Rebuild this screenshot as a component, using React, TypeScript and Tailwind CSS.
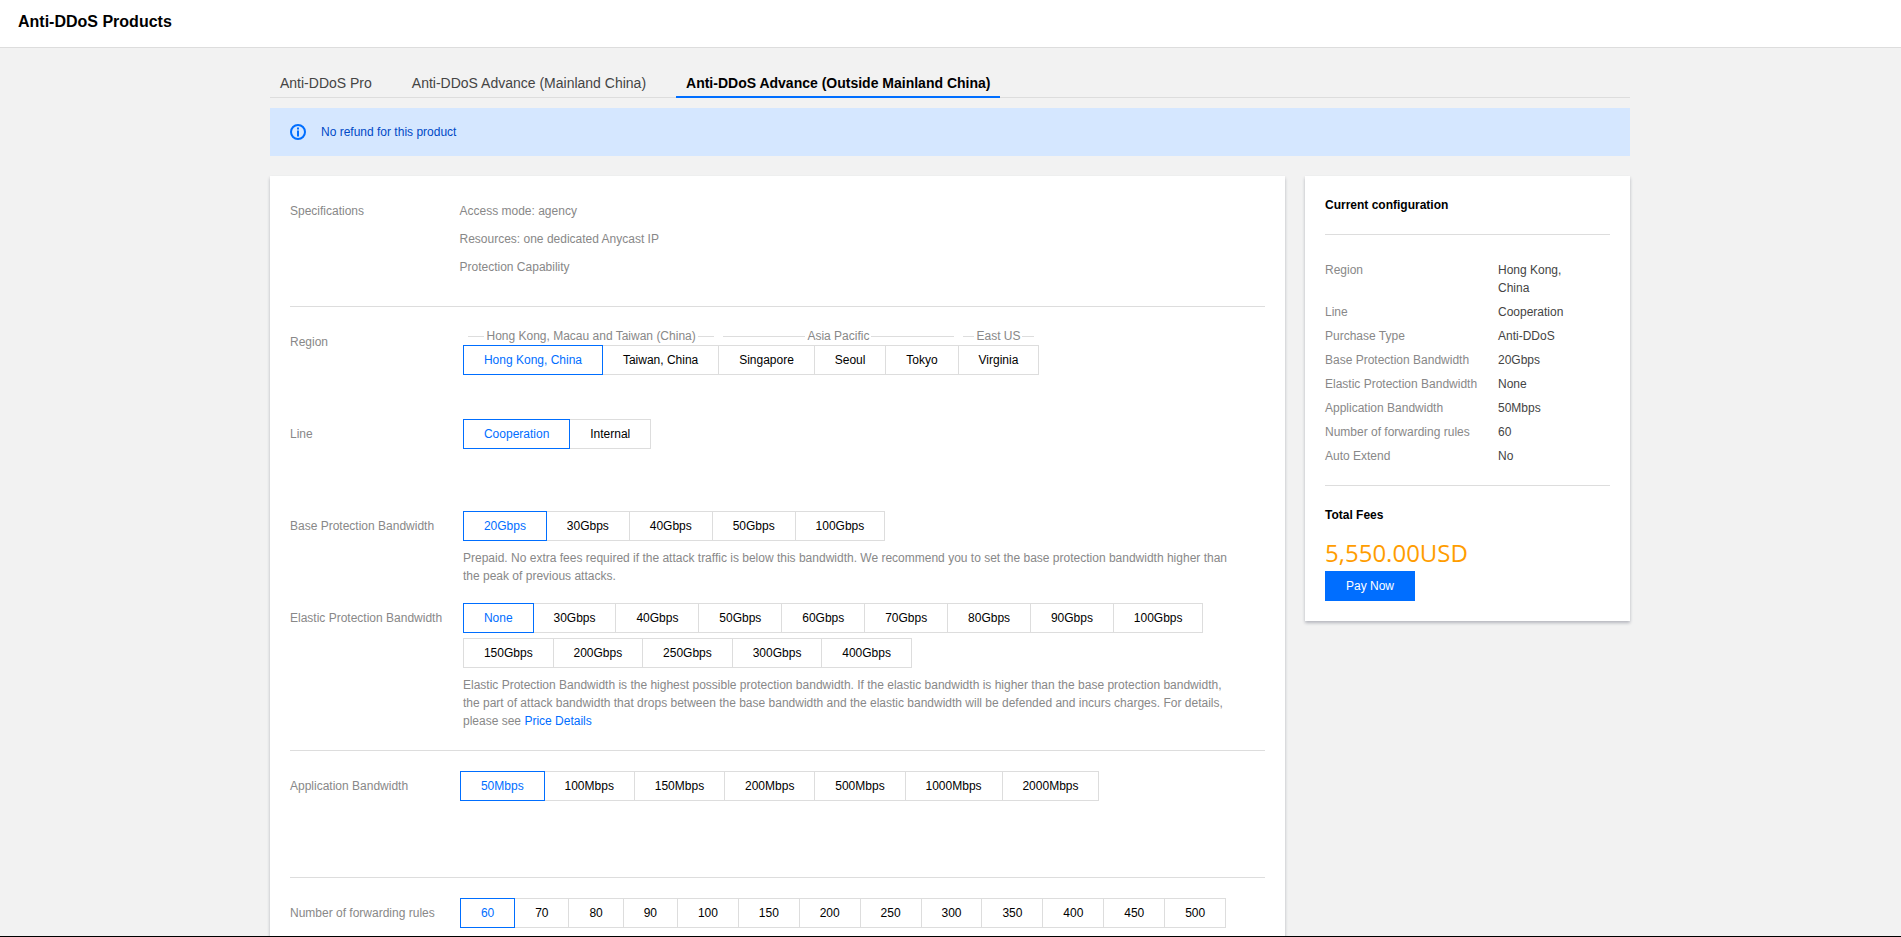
const regionGroups = [
  { title: "Hong Kong, Macau and Taiwan (China)", items: ["Hong Kong, China", "Taiwan, China"] },
  { title: "Asia Pacific", items: ["Singapore", "Seoul", "Tokyo"] },
  { title: "East US", items: ["Virginia"] },
]

const summary = [
  ["Region", "Hong Kong, China"],
  ["Line", "Cooperation"],
  ["Purchase Type", "Anti-DDoS"],
  ["Base Protection Bandwidth", "20Gbps"],
  ["Elastic Protection Bandwidth", "None"],
  ["Application Bandwidth", "50Mbps"],
  ["Number of forwarding rules", "60"],
  ["Auto Extend", "No"],
]

function Option({ label, active, first }: { label: string; active?: boolean; first?: boolean }) {
  return (
    <button
      className={`h-[30px] px-[19.95px] border text-xs whitespace-nowrap bg-white ${first ? "" : "-ml-px"} ${
        active ? "relative z-10 border-[#006eff] text-[#006eff]" : "border-[#ddd] text-black"
      }`}
    >
      {label}
    </button>
  )
}

function Options({ items, active }: { items: string[]; active?: string }) {
  return (
    <div className="flex">
      {items.map((item, i) => (
        <Option key={item} label={item} active={item === active} first={i === 0} />
      ))}
    </div>
  )
}

function Row({ label, indent, className, children }: { label: string; indent?: string; className?: string; children: React.ReactNode }) {
  return (
    <div className={`flex ${className ?? ""}`}>
      <div className={`shrink-0 text-xs leading-[18px] text-[#888] pt-1.5 ${indent ?? "w-[173px]"}`}>{label}</div>
      <div className="min-w-0">{children}</div>
    </div>
  )
}

function Divider() {
  return <div className="h-px bg-[#ddd]" />
}

export default function App() {
  return (
    <div className="h-screen overflow-hidden flex flex-col bg-[#f2f2f2] font-['Liberation_Sans',Arial,sans-serif]">
      <header className="h-12 shrink-0 bg-white border-b border-[#ddd] pl-[18px] pb-1 flex items-center">
        <h1 className="text-base font-bold text-black">Anti-DDoS Products</h1>
      </header>

      <main className="flex-1 min-h-0 overflow-hidden">
        <div className="w-[1360px] ml-[270px]">
          <div className="mt-5 h-[30px] flex border-b border-[#ddd] text-sm">
            <div className="h-[30px] leading-[30px] px-2.5 mr-5 text-[#444]">Anti-DDoS Pro</div>
            <div className="h-[30px] leading-[30px] px-2.5 mr-5 text-[#444]">Anti-DDoS Advance (Mainland China)</div>
            <div className="h-[30px] leading-[30px] px-2.5 font-bold text-black border-b-2 border-[#006eff]">
              Anti-DDoS Advance (Outside Mainland China)
            </div>
          </div>

          <div className="mt-2.5 h-12 bg-[#d5e7ff] pl-5 flex items-center gap-[15px] text-xs text-[#0049c6]">
            <svg width="16" height="16" viewBox="0 0 16 16" fill="none">
              <circle cx="8" cy="8" r="7" stroke="#006eff" strokeWidth="2" />
              <rect x="7" y="3.5" width="2" height="2" fill="#006eff" />
              <rect x="7" y="6.5" width="2" height="6" fill="#006eff" />
            </svg>
            No refund for this product
          </div>

          <div className="mt-5 flex items-start gap-5">
            <div className="w-[1015px] shrink-0 bg-white px-5 shadow-[0_2px_3px_rgba(54,58,80,0.32)]">
              <div className="flex pt-[26px] pb-[30px] text-xs leading-[18px] text-[#888]">
                <div className="w-[169.5px] shrink-0">Specifications</div>
                <div className="flex flex-col gap-2.5">
                  <div>Access mode: agency</div>
                  <div>Resources: one dedicated Anycast IP</div>
                  <div>Protection Capability</div>
                </div>
              </div>
              <Divider />

              <Row label="Region" className="pt-5">
                <div className="flex">
                  {regionGroups.map((group, g) => (
                    <div key={group.title} className={g === 0 ? "" : "-ml-px"}>
                      <div className="h-[18px] px-[5px] flex items-center gap-0.5 text-xs text-[#888] whitespace-nowrap">
                        <span className="flex-1 h-px bg-[#ddd]" />
                        {group.title}
                        <span className="flex-1 h-px bg-[#ddd]" />
                      </div>
                      <div className="flex">
                        {group.items.map((item, i) => (
                          <Option key={item} label={item} first={i === 0} active={item === "Hong Kong, China"} />
                        ))}
                      </div>
                    </div>
                  ))}
                </div>
              </Row>

              <Row label="Line" className="mt-[44px]">
                <Options items={["Cooperation", "Internal"]} active="Cooperation" />
              </Row>

              <Row label="Base Protection Bandwidth" className="mt-[62px]">
                <Options items={["20Gbps", "30Gbps", "40Gbps", "50Gbps", "100Gbps"]} active="20Gbps" />
                <p className="mt-2 w-[770px] text-xs leading-[18px] text-[#888]">
                  Prepaid. No extra fees required if the attack traffic is below this bandwidth. We recommend you to set the base protection bandwidth higher than the peak of previous attacks.
                </p>
              </Row>

              <Row label="Elastic Protection Bandwidth" className="mt-[18px] pb-5">
                <Options
                  items={["None", "30Gbps", "40Gbps", "50Gbps", "60Gbps", "70Gbps", "80Gbps", "90Gbps", "100Gbps"]}
                  active="None"
                />
                <div className="mt-[5px]">
                  <Options items={["150Gbps", "200Gbps", "250Gbps", "300Gbps", "400Gbps"]} />
                </div>
                <p className="mt-2 w-[770px] text-xs leading-[18px] text-[#888]">
                  Elastic Protection Bandwidth is the highest possible protection bandwidth. If the elastic bandwidth is higher than the base protection bandwidth, the part of attack bandwidth that drops between the base bandwidth and the elastic bandwidth will be defended and incurs charges. For details, please see <span className="text-[#006eff]">Price Details</span>
                </p>
              </Row>
              <Divider />

              <Row label="Application Bandwidth" indent="w-[170px]" className="pt-5 pb-[76px]">
                <Options
                  items={["50Mbps", "100Mbps", "150Mbps", "200Mbps", "500Mbps", "1000Mbps", "2000Mbps"]}
                  active="50Mbps"
                />
              </Row>
              <Divider />

              <Row label="Number of forwarding rules" indent="w-[170px]" className="pt-5 pb-5">
                <Options
                  items={["60", "70", "80", "90", "100", "150", "200", "250", "300", "350", "400", "450", "500"]}
                  active="60"
                />
              </Row>
            </div>

            <aside className="w-[325px] shrink-0 bg-white px-5 py-5 shadow-[0_2px_3px_rgba(54,58,80,0.32)] text-xs leading-[18px]">
              <div className="font-bold text-black">Current configuration</div>
              <div className="mt-5">
                <Divider />
              </div>
              <div className="mt-[26px] flex flex-col gap-1.5">
                {summary.map(([k, v]) => (
                  <div key={k} className="flex">
                    <div className="w-[173px] shrink-0 text-[#888]">{k}</div>
                    <div className="w-[80px] text-[#444]">{v}</div>
                  </div>
                ))}
              </div>
              <div className="mt-5">
                <Divider />
              </div>
              <div className="mt-5 font-bold text-black">Total Fees</div>
              <div className="mt-[11px] h-9 leading-9 text-2xl text-[#ff9d00] font-['Open_Sans',sans-serif]">5,550.00USD</div>
              <button className="block w-[90px] h-[30px] bg-[#006eff] text-white text-xs">Pay Now</button>
            </aside>
          </div>
        </div>
      </main>

      <div className="h-px shrink-0 bg-black" />
    </div>
  )
}
